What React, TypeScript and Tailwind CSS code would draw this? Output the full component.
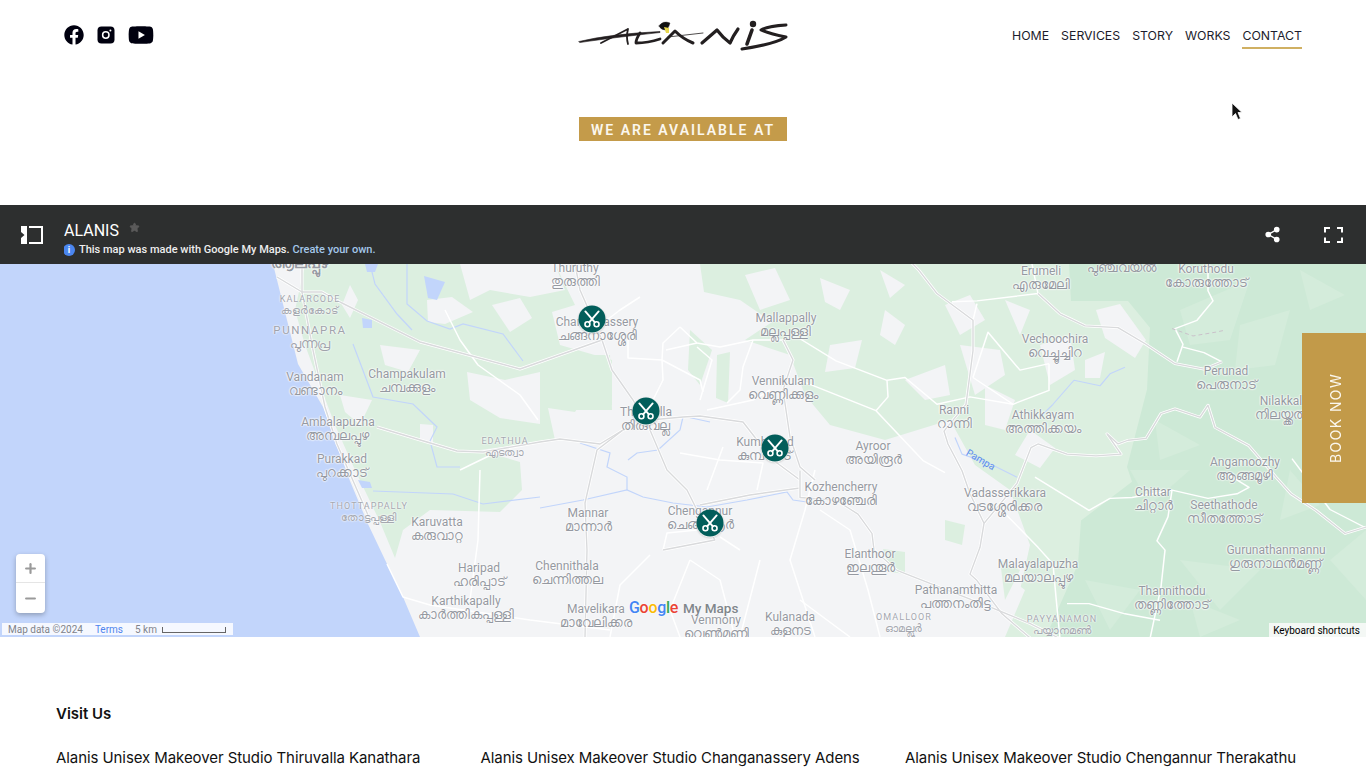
import { FaFacebook, FaYoutube } from 'react-icons/fa';
import { Minus, Plus, Share2, Star } from 'lucide-react';

const navLinks = ['HOME', 'SERVICES', 'STORY', 'WORKS', 'CONTACT'];

// x, y (page coords), english, malayalam
const towns: [number, number, string, string][] = [
  [575, 268, 'Thuruthy', 'തുരുത്തി'],
  [315, 377, 'Vandanam', 'വണ്ടാനം'],
  [407, 374, 'Champakulam', 'ചമ്പക്കുളം'],
  [338, 422, 'Ambalapuzha', 'അമ്പലപ്പുഴ'],
  [342, 459, 'Purakkad', 'പുറക്കാട്'],
  [437, 522, 'Karuvatta', 'കരുവാറ്റ'],
  [479, 568, 'Haripad', 'ഹരിപ്പാട്'],
  [466, 601, 'Karthikapally', 'കാർത്തികപ്പള്ളി'],
  [588, 513, 'Mannar', 'മാന്നാർ'],
  [567, 566, 'Chennithala', 'ചെന്നിത്തല'],
  [596, 609, 'Mavelikara', 'മാവേലിക്കര'],
  [597, 322, 'Changanassery', 'ചങ്ങനാശ്ശേരി'],
  [646, 412, 'Thiruvalla', 'തിരുവല്ല'],
  [700, 511, 'Chengannur', 'ചെങ്ങന്നൂർ'],
  [765, 442, 'Kumbanad', 'കുമ്പനാട്'],
  [786, 318, 'Mallappally', 'മല്ലപ്പള്ളി'],
  [783, 381, 'Vennikulam', 'വെണ്ണിക്കുളം'],
  [873, 446, 'Ayroor', 'അയിരൂർ'],
  [841, 487, 'Kozhencherry', 'കോഴഞ്ചേരി'],
  [870, 554, 'Elanthoor', 'ഇലന്തൂർ'],
  [790, 617, 'Kulanada', 'കുളനട'],
  [716, 620, 'Venmony', 'വെൺമണി'],
  [954, 410, 'Ranni', 'റാന്നി'],
  [1043, 415, 'Athikkayam', 'അത്തിക്കയം'],
  [1055, 339, 'Vechoochira', 'വെച്ചൂച്ചിറ'],
  [1041, 271, 'Erumeli', 'എരുമേലി'],
  [1206, 269, 'Koruthodu', 'കോരുത്തോട്'],
  [1226, 371, 'Perunad', 'പെരുനാട്'],
  [1281, 401, 'Nilakkal', 'നിലയ്ക്കൽ'],
  [1245, 462, 'Angamoozhy', 'ആങ്ങമൂഴി'],
  [1153, 492, 'Chittar', 'ചിറ്റാർ'],
  [1224, 505, 'Seethathode', 'സീതത്തോട്'],
  [1276, 550, 'Gurunathanmannu', 'ഗുരുനാഥൻമണ്ണ്'],
  [1172, 591, 'Thannithodu', 'തണ്ണിത്തോട്'],
  [1005, 493, 'Vadasserikkara', 'വടശ്ശേരിക്കര'],
  [1038, 564, 'Malayalapuzha', 'മലയാലപ്പുഴ'],
  [956, 590, 'Pathanamthitta', 'പത്തനംതിട്ട'],
];

const localities: [number, number, string, string][] = [
  [310, 300, 'KALARCODE', 'കളർകോട്'],
  [369, 507, 'THOTTAPPALLY', 'തോട്ടപ്പള്ളി'],
  [505, 442, 'EDATHUA', 'എടത്വാ'],
  [904, 618, 'OMALLOOR', 'ഓമല്ലൂർ'],
  [1062, 620, 'PAYYANAMON', 'പയ്യാനമൺ'],
];

const pins = [
  [592, 319],
  [646, 411],
  [775, 448],
  [710, 523],
];

const addresses = [
  'Alanis Unisex Makeover Studio Thiruvalla Kanathara',
  'Alanis Unisex Makeover Studio Changanassery Adens',
  'Alanis Unisex Makeover Studio Chengannur Therakathu',
];

const greenPatches = [
  '305,264 555,264 575,305 552,312 560,345 612,360 612,405 585,396 575,412 548,408 555,440 480,450 520,462 522,490 500,512 430,510 403,530 395,558 380,522 355,470 335,425 318,380 305,345 295,310',
  '700,264 1160,264 1160,637 1005,637 1025,590 985,560 960,520 925,500 885,440 830,425 805,395 790,355 745,340 772,322 740,300 704,292',
  '540,355 610,355 612,410 575,410 545,395',
  '717,355 730,352 728,403 716,398',
  '690,330 712,350 700,385 688,370',
];

const landIslands = [
  '460,264 555,264 565,290 530,297 490,290 470,300',
  '427,300 452,297 473,312 445,324 428,322',
  '492,305 520,298 532,318 510,332',
  '350,285 358,300 350,318 342,305',
  '380,345 420,350 408,372 385,365',
  '340,395 372,400 360,425 345,412',
  '467,372 505,380 540,372 540,424 500,418 470,400',
  '420,424 433,425 433,444 420,440',
  '745,275 775,268 790,300 760,310',
  '820,278 850,290 840,310 825,302',
  '885,310 905,325 895,345 880,335',
  '830,345 862,340 855,368 825,372',
  '880,270 905,285 890,298',
  '945,305 970,295 985,320 960,335',
  '960,345 1000,350 1005,375 975,395',
  '1005,300 1030,310 1020,335',
  '1040,345 1070,335 1075,370 1050,385',
  '905,380 945,365 950,395 925,400',
  '985,385 1015,400 1005,430 985,425',
  '1030,430 1055,448 1040,468 1015,455',
  '885,440 950,420 975,465 1010,490 1030,545 1020,590 985,637 880,637 860,520',
  '1096,310 1120,304 1146,340 1135,358 1105,338',
  '1085,360 1105,352 1100,378 1085,378',
];

const greenOnLand = [
  '883,549 905,552 905,574 890,572',
  '945,520 965,525 962,545 945,540',
  '1000,560 1020,570 1005,600',
];

const lightFacets = [
  '1180,310 1250,280 1230,340 1190,345',
  '1240,325 1290,310 1275,365 1235,370',
  '1300,270 1345,295 1310,310',
  '1180,560 1260,570 1220,610',
  '1085,580 1140,590 1110,630',
  '1130,470 1190,470 1150,505',
  '1155,420 1200,445 1160,460',
  '1330,560 1366,530 1366,600',
  '1290,470 1320,505 1280,520',
  '1190,600 1240,620 1200,637',
];

const roads = [
  'M640 297 L620 310 L603 323',
  'M680 327 L663 343 L662 360 L628 358 L628 340',
  'M680 327 L697 343 L720 347 L753 340 L783 340',
  'M666 350 L697 343 M697 347 L712 360 L703 390 L700 400',
  'M662 360 L700 380 L703 392 M662 360 L663 380 L653 400',
  'M707 410 L753 400 L770 390 M753 340 L743 367 L740 390 L727 403',
  'M680 453 L720 460 L763 463 L757 490 M723 447 L707 490',
  'M663 550 L667 533 L697 530 M720 537 L740 550',
  'M820 510 L850 530 L868 590 L880 637',
  'M815 470 L805 510 L790 560 L815 637',
  'M690 560 L720 580 L735 637 M690 560 L670 610 L680 637',
  'M387 564 L403 597 L430 605 L530 620 L610 630',
  'M650 555 L620 585 L610 637 M480 470 L478 540 L470 600',
  'M445 310 L460 340 L478 365 L520 395 L538 420',
  'M460 470 L497 452',
  'M800 600 L850 637 M760 560 L740 637',
];

const highways = [
  'M575 264 L580 290 L602 340 L612 370 L633 400 L650 430 L667 470 L687 490 L697 510 L715 540',
  'M302 264 L302 292 L322 292 L340 302 L420 342 L520 369 L540 362 L602 340',
  'M277 277 L302 292 L313 350 L325 407 L337 444 L368 515',
  'M377 427 L457 451 L483 452 L540 442 L560 439 L600 444 L623 430 L650 420 L683 417 L700 416 L743 422 L757 440 L773 460 L800 480',
  'M623 430 L597 450 L585 503 L587 550 L585 637',
  'M700 505 L750 495 L800 488',
  'M783 340 L793 360 L783 390 L790 437 L800 467 L815 480',
  'M663 550 L715 540',
];

const rivers = [
  'M370 264 L375 284 L397 314 L412 330',
  'M407 264 L407 304 L427 321 L450 329 L463 324 L503 334 L523 361',
  'M353 344 L373 397 L413 404 L437 427 L430 441 L437 467 L460 467',
  'M373 491 L453 494 L483 504 L540 497',
  'M540 508 L583 500 L627 490 L643 497 L673 503 L707 507 L747 500 L787 492 L793 500 L807 502',
  'M580 443 L610 453 L607 467 L627 477 L627 490',
  'M628 460 L637 453 L658 450 L680 430 L683 417',
  'M687 417 L710 422',
];

// everything below is traced from a crop that is squeezed sideways, drawn in the eastGroup transform
const darkPatch = '1069,264 1071,304 1128,304 1150,333 1147,400 1127,484 1132,500 1081,542 1078,589 1045,670 1366,670 1366,264';

const eastRoads = [
  'M800 345 L836 369 L887 390 L905 387 L937 416 L970 408 L1013 416 L1049 401 L1049 372',
  'M887 390 L888 408 L876 423 L800 390 M876 423 L923 477 L945 490',
  'M952 305 L977 304 L1038 296 L1032 264 M977 307 L973 325',
  'M973 387 L988 338 L1020 379 L1049 372 M973 387 L1013 416',
  'M1002 531 L1038 571 L1053 589 L1056 625 L1060 670',
  'M1035 495 L1089 531 L1110 518 L1132 517 L1172 509 L1208 518 L1237 513 L1249 506 L1225 490',
  'M1168 538 L1157 564 L1165 574 L1161 614 L1150 670 M1172 509 L1168 538',
  'M1067 632 L1089 632 L1125 643 L1160 650',
  'M1208 264 L1208 293 L1213 304 L1197 325 L1175 334 L1183 351 L1177 370 M1183 354 L1204 360 L1222 370',
  'M1292 475 L1330 530 L1366 550',
];

const eastHighways = [
  'M905 255 L919 271 L937 296 L973 325 L973 358 L966 416 L944 445 L948 459 L962 488 L970 513 L984 545 L980 571 L970 600 L977 607 L1002 643 L1031 670',
  'M984 545 L1017 502 L1031 463 L1038 459 L1067 470 L1096 472 L1121 470 L1107 448 L1118 459 L1128 455 L1146 453 L1161 426 L1175 421 L1200 430 L1208 417 L1215 441 L1249 461 L1276 495 L1291 513 L1316 531 L1345 556 L1366 549',
  'M1038 296 L1060 318 L1085 331 L1118 333 L1146 351 L1175 372 L1204 378 L1222 370',
  'M800 488 L800 517 L836 520 L858 535 L872 556 L874 574 L897 596 L930 610 L991 636 L1031 654 L1060 670',
];

const eastRivers = [
  'M955 452 L962 470 L991 481 L1017 495',
  'M1040 430 L1053 416 L1074 390 L1100 396 L1110 383 L1125 376',
];

function Logo() {
  return (
    <svg viewBox="578 18 210 33" className="h-[33px] w-[210px]" fill="none" stroke="#231f20" strokeLinecap="round" strokeLinejoin="round" aria-label="Alanis">
      <path d="M579 40.5 Q610 33 660 30.5 L660 31.5 Q610 37 580 41.5 Z" fill="#231f20" strokeWidth="0.6" />
      <path d="M628 28 L601 42 M628 28 Q626 36 628 43" strokeWidth="1.8" />
      <path d="M640 32 Q636 38 636 42 Q648 42 660 38" strokeWidth="2.8" />
      <path d="M663 42 L675 30 Q683 38 693 42" strokeWidth="3" />
      <path d="M668 36 L703 32" strokeWidth="0.8" />
      <path d="M702 42 L717 29 Q723 37 730 42 Q733 35 738 28" strokeWidth="3.2" />
      <path d="M747 43 L752 29" strokeWidth="3.6" />
      <circle cx="753" cy="23" r="3.2" fill="#231f20" stroke="none" />
      <path d="M786 24 Q768 25 761 29 Q770 33 786 36 Q775 43 742 48" strokeWidth="3" />
      <path d="M659 25 Q663 19 670 22 Q668 29 665 29 Q661 29 659 25 Z" fill="#111" strokeWidth="0.4" />
      <path d="M664 26 L669 27 L669 32 L666 32 Z" fill="#e8d84e" stroke="none" />
    </svg>
  );
}

function InstagramIcon() {
  return (
    <svg viewBox="0 0 18 18" className="h-[18px] w-[18px]">
      <rect width="17" height="17" x="0.5" y="0.5" rx="4" fill="#00000f" />
      <circle cx="8.8" cy="9" r="3.2" fill="none" stroke="#fff" strokeWidth="1.5" />
      <circle cx="13.4" cy="4.6" r="1" fill="#fff" />
    </svg>
  );
}

function Header() {
  return (
    <header className="flex h-[70px] items-center justify-between pl-16 pr-16">
      <div className="flex w-[300px] items-center gap-[13px] text-[#00000f]">
        <FaFacebook className="text-[20px]" />
        <InstagramIcon />
        <FaYoutube className="text-[26px]" />
      </div>
      <Logo />
      <nav className="flex w-[300px] justify-end gap-3 text-[12.3px] text-[#1c1c2c] [font-family:Inter,sans-serif]">
        {navLinks.map((link) => (
          <a key={link} className={link === 'CONTACT' ? 'border-b-2 border-[#d0b062] pb-[2px] pt-[6px]' : 'pb-[4px] pt-[6px]'}>
            {link}
          </a>
        ))}
      </nav>
    </header>
  );
}

function Scissors() {
  return (
    <svg viewBox="0 0 20 20" className="h-[19px] w-[19px]" fill="none" stroke="#fff" strokeWidth="1.7" strokeLinecap="round">
      <path d="M3 2 L13 13.5 M17 2 L7 13.5" strokeWidth="2" />
      <circle cx="5.2" cy="15.5" r="2.6" />
      <circle cx="14.8" cy="15.5" r="2.6" />
    </svg>
  );
}

function MapCanvas() {
  return (
    <div className="relative h-[373px] overflow-hidden bg-[#f3f4f6] [font-family:Roboto,sans-serif]">
      <svg viewBox="0 264 1366 373" className="absolute inset-0 h-full w-full">
        {greenPatches.map((p) => <polygon key={p} points={p} fill="#dcefe0" />)}
        <polygon points={darkPatch} fill="#cde9d6" transform="translate(0 20.3) scale(1 0.923)" />
        {lightFacets.map((p) => <polygon key={p} points={p} fill="#d4ecdb" />)}
        {landIslands.map((p) => <polygon key={p} points={p} fill="#f3f4f6" />)}
        {greenOnLand.map((p) => <polygon key={p} points={p} fill="#dcefe0" />)}
        <polygon points="0,264 273,264 278,284 298,364 323,407 350,481 368,524 387,564 403,597 420,637 0,637" fill="#c2d5fb" />
        <polygon points="424,276 445,282 437,300 428,298" fill="#c2d5fb" />
        <polygon points="365,264 378,264 375,272 367,272" fill="#c2d5fb" />
        <polygon points="362,318 372,320 372,328 363,328" fill="#c2d5fb" />
        <polygon points="358,480 370,482 372,488 362,488" fill="#c2d5fb" />
        {rivers.map((d) => <path key={d} d={d} fill="none" stroke="#c2d5fb" strokeWidth="1.2" />)}
        {roads.map((d) => <path key={d} d={d} fill="none" stroke="#fff" strokeWidth="1.5" strokeLinejoin="round" />)}
        {highways.map((d) => <path key={d} d={d} fill="none" stroke="#fff" strokeWidth="3" strokeLinejoin="round" />)}
        {highways.map((d) => <path key={d + 'c'} d={d} fill="none" stroke="#d9dadc" strokeWidth="1.4" strokeLinejoin="round" />)}
        <g fill="none" strokeLinejoin="round" transform="translate(0 20.3) scale(1 0.923)">
          {eastRivers.map((d) => <path key={d} d={d} stroke="#c2d5fb" strokeWidth="1.2" />)}
          {eastRoads.map((d) => <path key={d} d={d} stroke="#fff" strokeWidth="1.5" />)}
          {eastHighways.map((d) => <path key={d} d={d} stroke="#fff" strokeWidth="3" />)}
          {eastHighways.map((d) => <path key={d + 'c'} d={d} stroke="#d9dadc" strokeWidth="1.4" />)}
          <path d="M1172 334 L1193 342 L1215 338 L1224 336" stroke="#c9bfc9" strokeWidth="1" strokeDasharray="4 3" />
        </g>
      </svg>

      <div className="absolute left-[300px] top-[-9px] -translate-x-1/2 whitespace-nowrap text-[15px] font-bold leading-4 text-[#9599a1] [text-shadow:0_0_2px_#fff,0_0_2px_#fff]">ആലപ്പുഴ</div>
      <div className="absolute left-[310px] top-[60px] -translate-x-1/2 whitespace-nowrap text-center text-[11.5px] leading-[13px] tracking-[0.14em] text-[#a0a3ab] [text-shadow:0_0_2px_#fff,0_0_2px_#fff]">
        <div>PUNNAPRA</div>
        <div className="text-[13px] tracking-normal">പുന്നപ്ര</div>
      </div>
      <div className="absolute left-[1087px] top-[-4px] whitespace-nowrap text-[13px] leading-4 text-[#9599a1] [text-shadow:0_0_2px_#fff,0_0_2px_#fff]">പുഞ്ചവയൽ</div>

      {towns.map(([x, y, en, ml]) => (
        <div key={en} className="absolute -translate-x-1/2 whitespace-nowrap text-center text-[12px] leading-[13px] text-[#9599a1] [text-shadow:0_0_2px_#fff,0_0_2px_#fff,0_0_2px_#fff]" style={{ left: x, top: y - 264 - 6 }}>
          <div>{en}</div>
          <div className="text-[13px]">{ml}</div>
        </div>
      ))}
      {localities.map(([x, y, en, ml]) => (
        <div key={en} className="absolute -translate-x-1/2 whitespace-nowrap text-center text-[9px] leading-[11px] tracking-[0.12em] text-[#a5a8b0] [text-shadow:0_0_2px_#fff,0_0_2px_#fff]" style={{ left: x, top: y - 264 - 6 }}>
          <div>{en}</div>
          <div className="text-[11px] tracking-normal">{ml}</div>
        </div>
      ))}
      <span className="absolute left-[965px] top-[188px] rotate-[30deg] text-[10px] text-[#5b8def]">Pampa</span>

      {pins.map(([x, y]) => (
        <div key={x} className="absolute flex h-[27px] w-[27px] -translate-x-1/2 -translate-y-1/2 items-center justify-center rounded-full bg-[#025e5b] shadow-[0_1px_1px_#fff,0_1px_2px_#0005]" style={{ left: x, top: y - 264 }}>
          <Scissors />
        </div>
      ))}

      <div className="absolute left-[629px] top-[332px] flex items-baseline gap-[5px] whitespace-nowrap text-[#80868b] [text-shadow:0_0_2px_#fff]">
        <span className="text-[16px] font-medium tracking-[-0.3px]">
          <span className="text-[#4285f4]">G</span>
          <span className="text-[#ea4335]">o</span>
          <span className="text-[#fbbc04]">o</span>
          <span className="text-[#4285f4]">g</span>
          <span className="text-[#34a853]">l</span>
          <span className="text-[#ea4335]">e</span>
        </span>
        <span className="text-[13.5px] font-medium">My Maps</span>
      </div>

      <div className="absolute left-4 top-[290px] flex w-[29px] flex-col items-center rounded-sm bg-white text-[#9a9a9a] shadow-[0_2px_5px_#0004]">
        <span className="flex h-[29px] w-full items-center justify-center border-b border-[#e5e5e5]"><Plus size={15} strokeWidth={3.5} /></span>
        <span className="flex h-[30px] w-full items-center justify-center"><Minus size={15} strokeWidth={3.5} /></span>
      </div>

      <div className="absolute left-[2px] top-[359px] flex h-3 w-[231px] items-center bg-[#f5f8ff] pl-[6px] text-[10px] text-[#80838a]">
        <span>Map data ©2024</span>
        <span className="ml-3 text-[#4f84ee]">Terms</span>
        <span className="ml-3">5 km</span>
        <span className="ml-[5px] mt-[2px] h-[6px] w-[64px] border-x border-b border-[#666]" />
      </div>

      <div className="absolute bottom-0 right-0 flex h-[14px] w-[97px] items-center justify-center bg-[#f4f8f5] pr-[2px] text-[10px] text-black">
        Keyboard shortcuts
      </div>
    </div>
  );
}

function MapEmbed() {
  return (
    <section>
      <div className="flex h-[59px] items-center justify-between bg-[#2d2f2f] pl-[21px] pr-[23px] [font-family:Roboto,sans-serif]">
        <div className="flex h-full items-center">
          <svg viewBox="0 0 22 18" className="h-[18px] w-[22px]">
            <path d="M0 0 H6 V18 H0 V12 L3.5 9 L0 6 Z" fill="#fff" />
            <path d="M8 1 H21 V17 H8" fill="none" stroke="#fff" strokeWidth="2" />
          </svg>
          <div className="ml-[21px] h-[51px] self-start overflow-hidden pt-[15px]">
            <div className="flex items-start text-[16px] leading-[22px] text-white">
              ALANIS
              <Star size={11} className="ml-[10px] mt-[2px] fill-[#5a5a5a] text-[#5a5a5a]" />
            </div>
            <div className="-ml-[1px] mt-[1px] flex items-center text-[11px] font-medium leading-[14px] text-[#eee]">
              <span className="mr-[4px] flex h-3 w-3 items-center justify-center rounded-full bg-[#4a86f0] text-[9px] font-bold leading-none text-white">i</span>
              This map was made with Google My Maps.
              <span className="ml-[3px] text-[#a4c7ea]">Create your own.</span>
            </div>
          </div>
        </div>
        <div className="flex items-center gap-[43px] text-white">
          <Share2 size={17} className="fill-white" />
          <svg viewBox="0 0 19 16" className="h-4 w-[19px]" fill="none" stroke="#fff" strokeWidth="2">
            <path d="M1 5.5 V1 H6 M13 1 H18 V5.5 M18 10.5 V15 H13 M6 15 H1 V10.5" />
          </svg>
        </div>
      </div>
      <MapCanvas />
    </section>
  );
}

export default function App() {
  return (
    <div className="relative h-[768px] overflow-hidden bg-white [font-family:Inter,sans-serif]">
      <Header />
      <div className="flex h-[135px] justify-center pt-[47px]">
        <h2 className="flex h-6 w-[208px] items-center justify-center bg-[#c49b4a] pt-[2px] text-[14px] font-semibold tracking-[2px] text-[#fbf7ee] [font-family:Roboto,sans-serif]">
          WE ARE AVAILABLE AT
        </h2>
      </div>
      <MapEmbed />
      <section className="pl-14 pt-[67px] text-[#111]">
        <h3 className="text-[15px] font-semibold leading-5">Visit Us</h3>
        <div className="mt-6 grid grid-cols-[repeat(3,424.5px)] text-[15px] leading-5 tracking-[-0.08px]">
          {addresses.map((a) => <p key={a}>{a}</p>)}
        </div>
      </section>

      <a className="fixed right-0 top-[333px] flex h-[170px] w-16 rotate-180 items-center justify-center bg-[#c29a49] pr-[4px] text-[14px] font-normal tracking-[0.1em] text-[#fbf7ee] [writing-mode:vertical-rl]">
        BOOK NOW
      </a>

      <svg viewBox="0 0 12 19" className="absolute left-[1231px] top-[102px] h-[19px] w-[12px]">
        <path d="M1 1 L1 15 L4.5 11.5 L7 17.5 L9.5 16.5 L7 10.5 L11 10.5 Z" fill="#111" stroke="#fff" strokeWidth="0.8" />
      </svg>
    </div>
  );
}
